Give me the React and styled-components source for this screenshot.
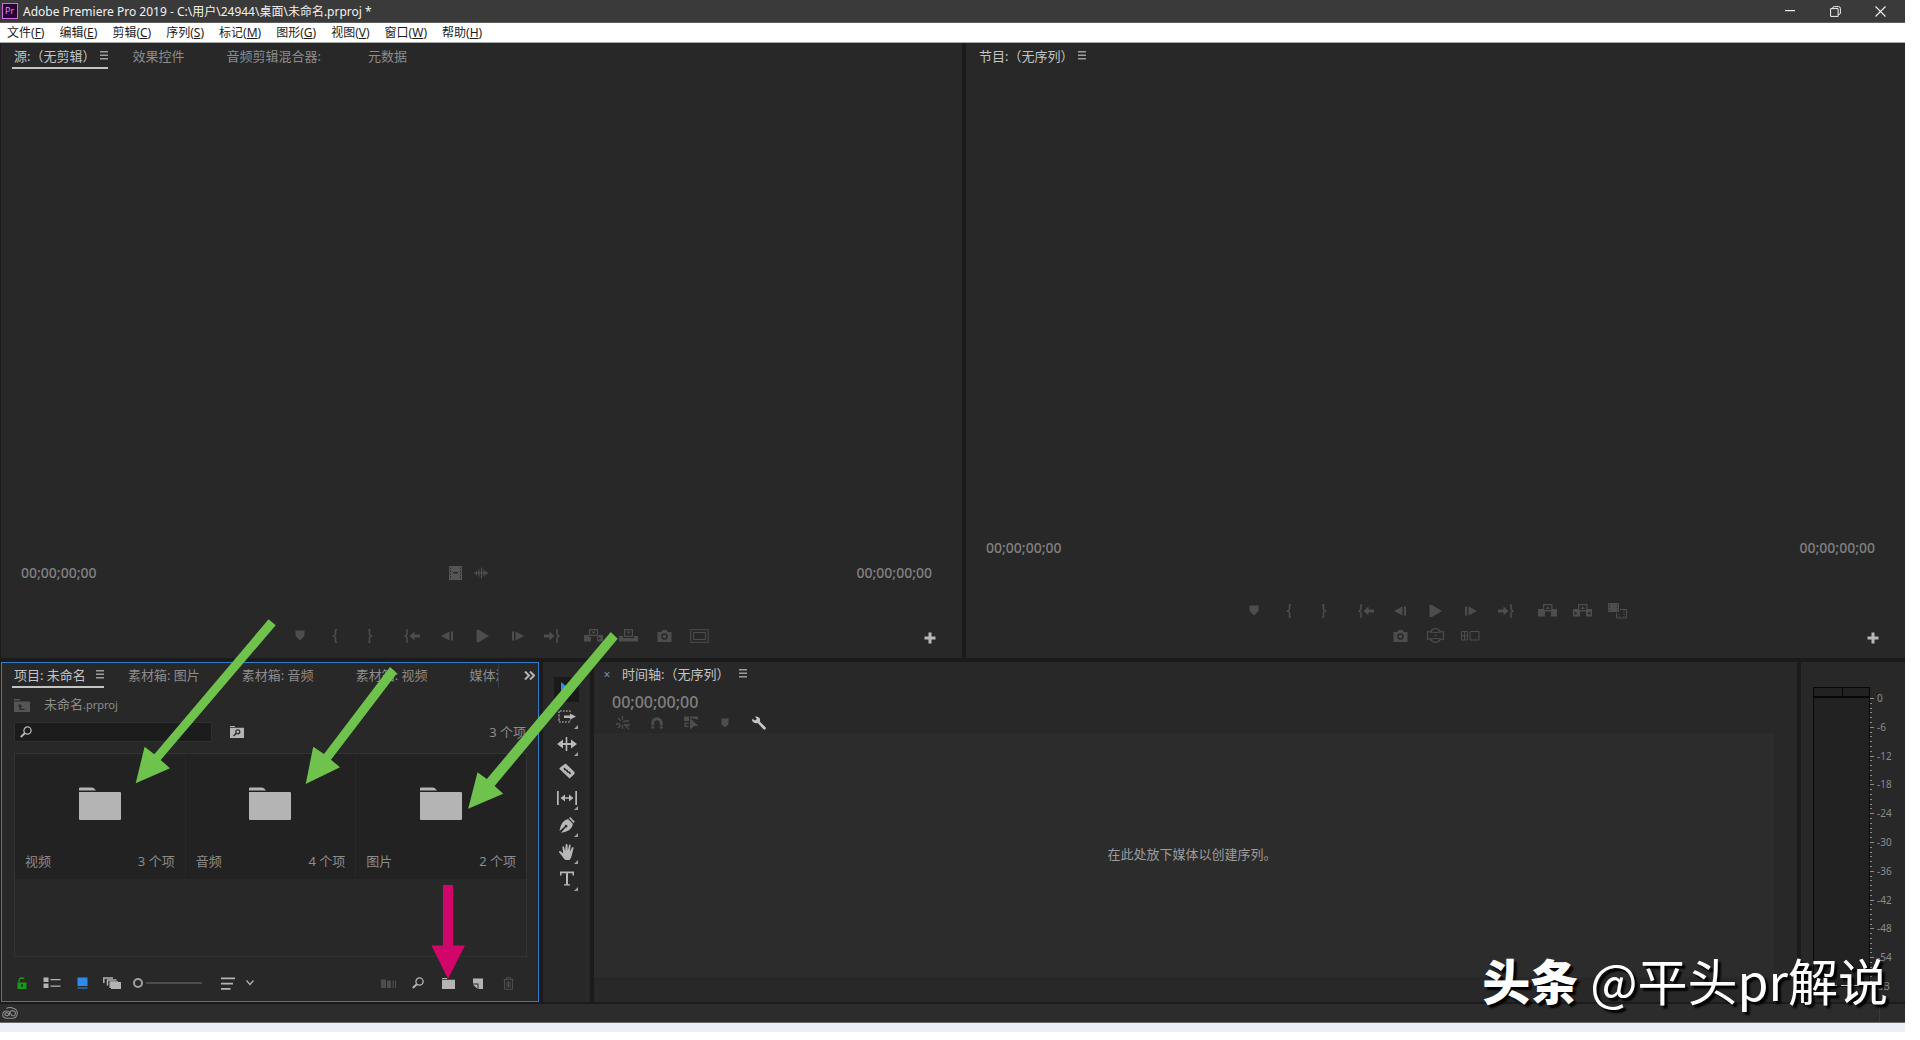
import React, { useState } from "react";
import styled, { createGlobalStyle } from "styled-components";

const GlobalStyle = createGlobalStyle`
  * {
    box-sizing: border-box;
  }
  body {
    margin: 0;
    background: #ffffff;
    font-family: "Noto Sans", "Noto Sans CJK SC", sans-serif;
    font-size: 13px;
    color: #8c8c8c;
  }
  button {
    display: flex;
    align-items: center;
    justify-content: center;
    padding: 0;
    border: none;
    background: none;
    color: inherit;
    font: inherit;
    white-space: nowrap;
  }
`;

const Page = styled.div`
  min-height: 100vh;
  padding: 0 15px 8px 0;
  display: flex;
`;

const Window = styled.div`
  position: relative;
  flex: 1;
  min-width: 0;
  display: flex;
  flex-direction: column;
  background: #1b1b1b;
`;

const TitleBar = styled.header`
  display: flex;
  align-items: center;
  height: 23px;
  padding: 0 2px;
  background: #3a3a3a;
  border-bottom: 1px solid #5c5c5c;
  color: #f2f2f2;
  h1 {
    flex: 1;
    margin: 2px 0 0 5px;
    font-size: 12px;
    font-weight: 400;
    line-height: 20px;
  }
`;

const WindowButton = styled.button`
  width: 45px;
  height: 20px;
`;

const MenuBar = styled.nav`
  display: flex;
  gap: 15px;
  height: 20px;
  padding-left: 7px;
  background: #ffffff;
  border-bottom: 1px solid #a9adab;
  color: #1c1c1c;
  font-size: 12px;
  line-height: 18px;
`;

const TopRow = styled.div`
  flex: 1;
  display: grid;
  grid-template-columns: 961fr 939fr;
  gap: 4px;
  padding-left: 1px;
`;

const BottomRow = styled.div`
  display: grid;
  grid-template-columns: 538fr 47px 1203fr 104px;
  gap: 4px;
  padding: 4px 0 2px 1px;
`;

const Panel = styled.section`
  display: flex;
  flex-direction: column;
  min-width: 0;
  background: #282828;
`;

const MonitorPanel = styled(Panel)`
  padding: 1px 0 10px;
`;

const ProjectPanel = styled(Panel)`
  border: 1px solid #2f7ccb;
`;

const TabRow = styled.div`
  display: flex;
  height: 25px;
  padding-left: ${(p) => p.$indent || 11}px;
`;

const Tab = styled.button`
  gap: ${(p) => (p.$spread ? 10 : 5)}px;
  height: 25px;
  padding: 0 ${(p) => (p.$active ? 0 : 2)}px 0 2px;
  margin-right: ${(p) => p.$gap || 0}px;
  border-bottom: 2px solid ${(p) => (p.$active && !p.$plain ? "#c4c4c4" : "transparent")};
  color: ${(p) => (p.$active ? "#c4c4c4" : "#8c8c8c")};
`;

const ClippedTab = styled.div`
  width: 31px;
  overflow: hidden;
  border-right: 1px solid #3c3c3c;
`;

const OverflowButton = styled.button`
  margin-left: auto;
  width: 17px;
  color: #b4b4b4;
`;

const Viewer = styled.div`
  flex: 1;
  min-height: 200px;
`;

const TimeRow = styled.div`
  display: grid;
  grid-template-columns: 1fr auto 1fr;
  align-items: center;
  height: 20px;
  margin: 0 30px 40px 20px;
`;

const Timecode = styled.span`
  color: #808080;
  font-size: ${(p) => (p.$large ? 16 : 14)}px;
  font-weight: 500;
  line-height: 20px;
  &:last-child {
    justify-self: end;
  }
`;

const MediaButtons = styled.div`
  display: flex;
  gap: 12px;
  padding-right: 17px;
  color: #555555;
`;

const Transport = styled.div`
  display: grid;
  grid-template-columns: 1fr auto 1fr;
  color: #4d4d4d;
`;

const ButtonRows = styled.div`
  grid-column: 2;
  padding-left: ${(p) => p.$shift || 0}px;
`;

const ButtonRow = styled.div`
  display: flex;
  justify-content: center;
`;

const TransportButton = styled.button`
  width: 35px;
  height: 25px;
  margin-left: ${(p) => (p.$apart ? 7 : 0)}px;
`;

const AddButton = styled.button`
  align-self: end;
  justify-self: end;
  width: 22px;
  height: 20px;
  margin-right: 21px;
  color: #b8b8b8;
`;

const PathRow = styled.div`
  display: flex;
  align-items: center;
  gap: 14px;
  height: 34px;
  padding-left: 12px;
  color: #8c8c8c;
  svg {
    color: #555555;
  }
  p {
    margin: 0 0 2px;
    line-height: 18px;
  }
  small {
    font-size: 11px;
  }
`;

const SearchRow = styled.div`
  display: flex;
  align-items: center;
  height: 20px;
  margin: 0 12px 11px;
  line-height: 16px;
  button {
    margin-left: 18px;
    color: #b4b4b4;
  }
`;

const SearchBox = styled.label`
  display: flex;
  align-items: center;
  width: 198px;
  height: 20px;
  padding-left: 5px;
  background: #1c1c1c;
  border: 1px solid #303030;
  border-radius: 2px;
  color: #b4b4b4;
  input {
    flex: 1;
    min-width: 0;
    border: none;
    outline: none;
    background: none;
    color: #c4c4c4;
  }
`;

const Count = styled.span`
  margin-left: auto;
  color: #8c8c8c;
`;

const BinGrid = styled.div`
  flex: 1;
  min-height: 204px;
  margin: 0 11px 0 12px;
  border: 1px solid #323232;
  display: grid;
  grid-template-columns: repeat(3, 1fr);
  align-content: start;
  gap: 1px;
`;

const Bin = styled.div`
  display: flex;
  flex-direction: column;
  height: 125px;
  background: #222222;
  color: #b4b4b4;
`;

const BinThumb = styled.div`
  flex: 1;
  display: flex;
  align-items: flex-end;
  justify-content: center;
  padding-bottom: 31px;
`;

const BinInfo = styled.div`
  display: flex;
  height: 28px;
  padding: 0 10px;
  line-height: 20px;
  color: #8c8c8c;
`;

const ProjectTools = styled.div`
  display: flex;
  align-items: center;
  height: 44px;
  padding: 8px 15px 0 5px;
  color: #b4b4b4;
`;

const ProjectButton = styled.button`
  width: 30px;
  height: 24px;
  color: ${(p) => p.$color || "#b4b4b4"};
  margin-left: ${(p) => (p.$pushed ? "auto" : "0")};
`;

const SortOptions = styled.button`
  width: 14px;
`;

const ZoomSlider = styled.input`
  appearance: none;
  width: 72px;
  height: 12px;
  margin: 0 8px 0 6px;
  background: linear-gradient(#4c4c4c, #4c4c4c) 13px 50% / 56px 2px no-repeat;
  &::-webkit-slider-thumb {
    appearance: none;
    width: 10px;
    height: 10px;
    border: 2px solid #a0a0a0;
    border-radius: 50%;
    background: #282828;
  }
`;

const ToolPanel = styled(Panel)`
  align-items: center;
  gap: 2px;
  padding-top: 15px;
  color: #b8b8b8;
`;

const ToolButton = styled.button`
  position: relative;
  width: 25px;
  height: 25px;
  background: ${(p) => (p.$active ? "#1a1a1a" : "none")};
  color: ${(p) => (p.$active ? "#2d8ceb" : "inherit")};
  &::after {
    content: "";
    display: ${(p) => (p.$more ? "block" : "none")};
    position: absolute;
    right: 1px;
    bottom: 0;
    border: 2px solid transparent;
    border-right-color: #a0a0a0;
    border-bottom-color: #a0a0a0;
  }
`;

const CloseTab = styled.button`
  width: 12px;
  margin-right: 7px;
  font-size: 12px;
`;

const TimelineHead = styled.div`
  display: flex;
  height: 26px;
  padding: 5px 0 0 18px;
`;

const TimelineTools = styled.div`
  display: flex;
  height: 20px;
  padding-left: 12px;
  color: #4d4d4d;
`;

const TimelineButton = styled.button`
  width: 34px;
  color: ${(p) => p.$color || "inherit"};
`;

const DropArea = styled.div`
  flex: 1;
  display: flex;
  align-items: center;
  justify-content: center;
  margin: 0 23px 25px 0;
  padding: 0 0 4px 16px;
  background: #2c2c2c;
  color: #9c9c9c;
`;

const MeterPanel = styled(Panel)`
  flex-direction: row;
  padding: 25px 0 15px 12px;
`;

const Meter = styled.div`
  width: 57px;
  display: flex;
  flex-direction: column;
  border: 1px solid #080808;
  background: #222222;
`;

const PeakLights = styled.div`
  display: grid;
  grid-template-columns: 1fr 1fr;
  height: 10px;
  border-bottom: 2px solid #080808;
  span + span {
    border-left: 1px solid #080808;
  }
`;

const MeterFloor = styled.div`
  display: flex;
  gap: 4px;
  margin: auto 10px 0 4px;
  span {
    flex: 1;
    height: 1px;
    background: #e6e600;
  }
`;

const Scale = styled.div`
  flex: 1;
  display: flex;
  flex-direction: column;
  padding-top: 11px;
  font-size: 10px;
`;

const ScaleStep = styled.div`
  flex: 1;
  display: flex;
  gap: 3px;
  span {
    line-height: 10px;
    margin-top: -5px;
  }
`;

const Ticks = styled.div`
  width: 4px;
  display: flex;
  flex-direction: column;
  i {
    flex: 1;
    width: 2px;
    border-top: 1px solid #8c8c8c;
  }
  i:first-child {
    width: 4px;
  }
`;

const ScaleEnd = styled.div`
  height: 1px;
  padding-left: 7px;
  line-height: 1px;
`;

const StatusBar = styled.footer`
  display: flex;
  align-items: center;
  justify-content: space-between;
  height: 19px;
  padding: 0 25px 0 2px;
  background: #2c2c2c;
  border-bottom: 1px solid #6a6a6c;
  color: #8c8c8c;
  &::after {
    content: "";
    width: 1px;
    height: 18px;
    background: #3a3a3a;
  }
`;

const Desktop = styled.div`
  height: 9px;
  background: #eceff6;
`;

const Arrows = styled.svg`
  position: absolute;
  left: 0;
  bottom: 0;
  pointer-events: none;
`;

const Watermark = styled.div`
  position: absolute;
  right: 17px;
  bottom: 18px;
  display: flex;
  align-items: center;
  gap: 12px;
  color: #ffffff;
  font-family: "Noto Sans CJK SC", sans-serif;
  font-size: 50px;
  line-height: 70px;
  white-space: nowrap;
  text-shadow: 3px 3px 2px #000000;
  strong {
    font-size: 48px;
    font-weight: 900;
  }
`;

// every drawing inherits its colour from the button that holds it
const Icon = ({ w = 16, h = 16, children }) => (
  <svg width={w} height={h} viewBox={`0 0 ${w} ${h}`} fill="currentColor" aria-hidden="true">
    {children}
  </svg>
);

const stroke = { fill: "none", stroke: "currentColor" };

const icons = {
  menu: (
    <Icon w={8} h={9}>
      <path d="M0 0h8v1.5H0zM0 3.5h8V5H0zM0 7h8v1.5H0z" opacity=".75" />
    </Icon>
  ),
  chevrons: (
    <Icon w={11} h={9}>
      <path d="M1 0.5l4 4-4 4M6 0.5l4 4-4 4" {...stroke} strokeWidth="2" />
    </Icon>
  ),
  film: (
    <Icon w={13} h={14}>
      <path fillRule="evenodd" d="M0 0h13v14H0zM4 6h5v1.5H4zM1 1.5h1v1.5H1zM1 4.5h1V6H1zM1 7.5h1V9H1zM1 10.5h1V12H1zM11 1.5h1V3h-1zM11 4.5h1V6h-1zM11 7.5h1V9h-1zM11 10.5h1V12h-1z" />
    </Icon>
  ),
  wave: (
    <Icon w={14} h={12}>
      <path d="M0 6h14M2.5 4v4M5 2.5v7M7.500 0.5v11M10 2.5v7M12 4v4" {...stroke} />
    </Icon>
  ),
  marker: (
    <Icon w={10} h={11}>
      <path d="M0.5 0.5h9v5.500L5 10.5 0.5 6z" />
    </Icon>
  ),
  markIn: (
    <Icon w={6} h={14}>
      <path d="M5 1H3.500v4.500L1.500 7l2 1.500V13H5" {...stroke} strokeWidth="1.500" />
    </Icon>
  ),
  markOut: (
    <Icon w={6} h={14}>
      <path d="M1 1h1.500v4.500L4.500 7l-2 1.500V13H1" {...stroke} strokeWidth="1.500" />
    </Icon>
  ),
  goIn: (
    <Icon w={16} h={14}>
      <path d="M4 1H3v4.500L1 7l2 1.500V13h1" {...stroke} strokeWidth="1.500" />
      <path d="M5.500 7l5-4.500V5.500H16v3h-5.500v3z" />
    </Icon>
  ),
  goOut: (
    <Icon w={16} h={14}>
      <path d="M12 1h1v4.500L15 7l-2 1.500V13h-1" {...stroke} strokeWidth="1.500" />
      <path d="M10.500 7l-5-4.500V5.500H0v3h5.500v3z" />
    </Icon>
  ),
  stepBack: (
    <Icon w={13} h={10}>
      <path d="M0 5l8.500-4.500v9zM10 0.500h2v9h-2z" />
    </Icon>
  ),
  play: (
    <Icon w={13} h={12}>
      <path d="M0.500 0H3l10 6-10 6H0.500z" />
    </Icon>
  ),
  stepForward: (
    <Icon w={13} h={10}>
      <path d="M13 5L4.500 0.500v9zM1 0.500h2v9H1z" />
    </Icon>
  ),
  insert: (
    <Icon w={20} h={13}>
      <path fillRule="evenodd" d="M5 0h9v7H5zM6.200 1.200v4.600h6.600V1.200zM0 6h5.500v2H7v4.500H0zM13 6h6v6.500h-6zM14 7.500v3.500l3-1.800z" />
      <path d="M7.500 2.500h4L9.500 5z" />
    </Icon>
  ),
  overwrite: (
    <Icon w={20} h={13}>
      <path fillRule="evenodd" d="M5 0h9v8H5zM6.200 1.200v5.600h6.600V1.200zM0 7h4v2h11V7h4v5.500H0z" />
      <path d="M7.500 2.500h4L9.500 5z" />
    </Icon>
  ),
  lift: (
    <Icon w={20} h={13}>
      <path fillRule="evenodd" d="M5 0h9.500v5H19v7.500h-6V7.500H7v5H0V5h5zM6.200 1.200V6h7V1.200z" />
      <path d="M7.500 5L9.700 2.500 12 5z" />
    </Icon>
  ),
  extract: (
    <Icon w={20} h={13}>
      <path fillRule="evenodd" d="M5 0h9.500v5H19v7.500h-6V7.500H7v5H0V5h5zM6.200 1.200V6h7V1.200zM1.500 7.500v3.500l3-1.800zM17.500 7.500v3.500l-3-1.800z" />
      <path d="M7.500 5L9.700 2.500 12 5z" />
    </Icon>
  ),
  camera: (
    <Icon w={15} h={12}>
      <path fillRule="evenodd" d="M0.500 2H4L5.500 0h4L11 2h3.500v10H0.500zM7.500 3.200a3.300 3.300 0 100 6.600 3.300 3.300 0 000-6.600zm0 1.500a1.800 1.800 0 110 3.600 1.800 1.800 0 010-3.600z" />
    </Icon>
  ),
  frame: (
    <Icon w={19} h={14}>
      <path d="M0.700 0.700h17.600v12.600H0.700zM3.500 3.500h12v7h-12z" {...stroke} />
    </Icon>
  ),
  compare: (
    <Icon w={20} h={16}>
      <path fillRule="evenodd" d="M0 0h11v9H0zM1 1.500v1h1v-1zM1 4v1h1V4zM1 6.500v1h1v-1zM9 1.500v1h1v-1zM9 4v1h1V4zM9 6.500v1h1v-1z" />
      <path d="M12 6.500h6.500v8.500h-10V10" {...stroke} />
      <path d="M11 11v4M16 7v8" {...stroke} strokeDasharray="1 1" />
    </Icon>
  ),
  vr: (
    <Icon w={17} h={15}>
      <path d="M0.500 3.500q8 2 16 0v8q-8-2-16 0zM3.500 3.500q5-6 10 0M3.500 11.500q5 6 10 0" {...stroke} strokeWidth="1.200" />
      <path d="M7.500 6.800h2v1.400h-2z" />
    </Icon>
  ),
  multicam: (
    <Icon w={19} h={10}>
      <path d="M0.500 0.500h6v8.500h-6zM3.500 0v9M0 4.700h7M9 0.500h9v8.500H9z" {...stroke} />
    </Icon>
  ),
  add: (
    <Icon w={12} h={12}>
      <path d="M4.500 0.500h3v4h4v3h-4v4h-3v-4h-4v-3h4z" />
    </Icon>
  ),
  folderUp: (
    <Icon w={16} h={13}>
      <path fillRule="evenodd" d="M0 0h6v1.500H0zM0 2.500h16V13H0zM6 5L3.500 7.500h2V11h5V9.700H7V7.500h1.500z" />
    </Icon>
  ),
  magnifier: (
    <Icon w={12} h={12}>
      <circle cx="7.500" cy="4.500" r="3.600" {...stroke} strokeWidth="1.300" />
      <path d="M5 7L0.800 11" {...stroke} strokeWidth="2" />
    </Icon>
  ),
  binSearch: (
    <Icon w={14} h={12}>
      <path d="M0 0h5v1H0zM0 1.800h14V12H0z" />
      <circle cx="7.800" cy="5.800" r="2" fill="none" stroke="#282828" strokeWidth="1.200" />
      <path d="M6.300 7.300L3.500 10" fill="none" stroke="#282828" strokeWidth="1.500" />
    </Icon>
  ),
  folder: (
    <Icon w={42} h={33}>
      <path d="M0 3.500V1.500Q0 0.500 1 0.500h12q2 0 4 3zM0 5h41q1 0 1 1v26q0 1-1 1H1q-1 0-1-1z" />
    </Icon>
  ),
  lock: (
    <Icon w={10} h={12}>
      <path fillRule="evenodd" d="M0.500 5.500h9V12h-9zM4.300 7v3h1.400V7z" />
      <path d="M2 5.500V4a3 3 0 013-3q1.500 0 2 1" {...stroke} strokeWidth="1.300" />
    </Icon>
  ),
  list: (
    <Icon w={18} h={12}>
      <path d="M0.500 0.500h5v4.500h-5zM0.500 6.500h5V11h-5zM7.500 2h10v1.200h-10zM7.500 8.500h10v1.200h-10z" />
    </Icon>
  ),
  iconView: (
    <Icon w={11} h={12}>
      <path d="M0.500 0.500h10V9h-10zM0.500 10.500h10v1h-10z" />
    </Icon>
  ),
  freeform: (
    <Icon w={18} h={12}>
      <path d="M8 5h10v7H8z" />
      <path d="M0.800 6V1h9.200M4.500 8.500V3h9M7.200 11V5h8" {...stroke} strokeWidth="1.500" />
    </Icon>
  ),
  sort: (
    <Icon w={14} h={13}>
      <path d="M0 0.500h14v1.700H0zM0 5.700h12v1.700H0zM0 11h9.500v1.700H0z" />
    </Icon>
  ),
  chevron: (
    <Icon w={8} h={6}>
      <path d="M0.500 0.500L4 4.500l3.500-4" {...stroke} strokeWidth="1.200" />
    </Icon>
  ),
  automate: (
    <Icon w={15} h={9}>
      <path d="M0 0.500h5V9H0zM6 1.500h4V9H6zM11.500 1.500h1.200V9h-1.200zM14 1.500h1V9h-1z" />
    </Icon>
  ),
  newBin: (
    <Icon w={13} h={11}>
      <path d="M0 0h5v1H0zM0 1.800h13V11H0z" />
    </Icon>
  ),
  newItem: (
    <Icon w={10} h={11}>
      <path d="M0 0.500h10V11H5.500V5.500H0zM0 6.500h4.500V11z" />
    </Icon>
  ),
  trash: (
    <Icon w={11} h={13}>
      <path d="M0.500 2.500h10M3.500 2V0.600h4V2M1.500 3v9.300h8V3M4 4.500v6M5.500 4.500v6M7 4.500v6" {...stroke} />
    </Icon>
  ),
  select: (
    <Icon w={12} h={15}>
      <path d="M0 0l11.500 9H6.500L0 14z" />
    </Icon>
  ),
  track: (
    <Icon w={18} h={13}>
      <path d="M1 3V1h11v1.500M1 9v3h11V10.500M1 4.500v4" {...stroke} strokeWidth="1.200" strokeDasharray="1.800 1.200" />
      <path d="M6 5.500h6V3.500l6 3-6 3.200V8H6z" />
    </Icon>
  ),
  ripple: (
    <Icon w={20} h={14}>
      <path d="M0 7l6-4.500v3.500h2.700V0h1.600v6H14V2.500L20 7l-6 4.500V8h-3.700v6H8.700V8H6v3.500z" />
    </Icon>
  ),
  razor: (
    <Icon w={16} h={16}>
      <path fillRule="evenodd" d="M6.500 0.500L8.500 2.300 15.500 9v2L10.500 15.500 8.500 13.500 0.500 6V5zM4.500 5.500l1 2 1.500 0.300 1 1.700 1.500 0.300 1.500 1.700 1-1-1-1.700-1.500-0.300-1-1.700L7 6.500 5.800 4.500z" />
    </Icon>
  ),
  slip: (
    <Icon w={20} h={14}>
      <path d="M0 0h1.700v14H0zM18.300 0H20v14h-1.700zM3.500 7l4.500-3.500V6.300h4V3.500L16.500 7 12 10.500V7.700H8v2.800z" />
    </Icon>
  ),
  pen: (
    <Icon w={16} h={16}>
      <path d="M10 1l1.200-0.900 4.600 4.600L14.500 6z" />
      <path fillRule="evenodd" d="M9 2l4.800 4.800q-0.300 4.200-4.300 6.700-3.500 1.800-7.500 2.200l4.700-5.200a1.400 1.400 0 10-1-1L0.500 14Q1 9 3.500 5.500 6 2.500 9 2z" />
    </Icon>
  ),
  hand: (
    <Icon w={16} h={16}>
      <path d="M4.200 9.500L3.400 3.500q-0.200-1.200 0.700-1.300 0.800 0 1.100 1.200l1 3.600L6.600 1q0-1 0.900-1t1 1l0.300 5.800L9.900 1.500q0.200-1 1-0.900 0.900 0.200 0.700 1.400L11 7.500l1.900-3.700q0.600-1 1.300-0.600 0.700 0.400 0.200 1.600L13 10.500q-0.700 4-2.500 5.500H6.300Q4.500 14.500 3 12L0.300 8.500q-0.600-1 0.200-1.500 0.700-0.300 1.500 0.400z" />
    </Icon>
  ),
  type: (
    <Icon w={14} h={15}>
      <path d="M0 0.500h14v4h-1.500V2.300H8v10.900h2v1.300H4v-1.300h2V2.300H1.500v2.200H0z" />
    </Icon>
  ),
  nest: (
    <Icon w={14} h={14}>
      <path d="M6.500 0v4M6.500 9v4M0 8h4M9 5h4M2 2l3 3M8 8l5 5M2 12l3-3M9 9h5M7 5.500h2" {...stroke} strokeWidth="1.300" />
    </Icon>
  ),
  magnet: (
    <Icon w={12} h={12}>
      <path d="M1.800 11.500V6a4.200 4.200 0 018.400 0v5.500" {...stroke} strokeWidth="3" />
      <path d="M0 8.500h12v1H0z" fill="#282828" />
    </Icon>
  ),
  linked: (
    <Icon w={15} h={14}>
      <path d="M0 0.500h5v4.500H0zM6 0.500h8v3L6 2zM6 2l8.500 8h-4L6 13.500zM0.500 6.500h4v1.200H1.700v2h2.800V11H0.500z" />
    </Icon>
  ),
  marker2: (
    <Icon w={8} h={10}>
      <path d="M0.500 0.500h7v6L4 9.500 0.500 6.500z" />
    </Icon>
  ),
  wrench: (
    <Icon w={14} h={14}>
      <path d="M3 0.500Q6 0 7.500 2q1 1.800 0.300 3.500l6 6q0.500 1.500-1 2.200-1 0-1.600-0.700L5.700 7Q2.500 8 0.500 5.500q-0.700-1.500 0-2.800L3 4.500 4.800 3z" />
    </Icon>
  ),
  cloud: (
    <Icon w={16} h={12}>
      <path d="M4.500 1.500Q8-0.500 11 1.300 15 2 15.300 6q-0.300 4.800-4 5.300H4Q0.700 10.500 0.700 7.500 1 4 4.500 4q3 0 4 2.500l1.500 2q2 1 3.200-0.800Q14 5 12 4 9.500 3 8 5L6.500 8q-1.800 1.500-3.300 0Q2.300 6 4.500 5.500q1.500 0 3.500 3" {...stroke} strokeWidth="1.100" />
    </Icon>
  ),
  minimize: (
    <Icon w={11} h={11}>
      <path d="M0 4h10v1.200H0z" />
    </Icon>
  ),
  restore: (
    <Icon w={11} h={11}>
      <path d="M0.600 2.600h7.500v7.800H0.600zM2.500 2.500Q2.500 0.600 4.500 0.600H8.500q1.900 0 1.900 1.900V7q0 1.500-2 1.500" {...stroke} />
    </Icon>
  ),
  close: (
    <Icon w={11} h={11}>
      <path d="M0.500 0.500l10 10M10.500 0.500l-10 10" {...stroke} strokeWidth="1.100" />
    </Icon>
  ),
};

const menus = [
  ["文件", "F"],
  ["编辑", "E"],
  ["剪辑", "C"],
  ["序列", "S"],
  ["标记", "M"],
  ["图形", "G"],
  ["视图", "V"],
  ["窗口", "W"],
  ["帮助", "H"],
];

const baseTransport = [
  ["marker", "添加标记"],
  ["markIn", "标记入点"],
  ["markOut", "标记出点"],
  ["goIn", "转到入点", true],
  ["stepBack", "后退一帧"],
  ["play", "播放"],
  ["stepForward", "前进一帧"],
  ["goOut", "转到出点"],
];

const sourceTransport = [
  [
    ...baseTransport,
    ["insert", "插入", true],
    ["overwrite", "覆盖"],
    ["camera", "导出帧"],
    ["frame", "安全边距"],
  ],
];

const programTransport = [
  [
    ...baseTransport,
    ["lift", "提升", true],
    ["extract", "提取"],
    ["compare", "比较视图"],
  ],
  [
    ["camera", "导出帧"],
    ["vr", "切换 VR 视频显示"],
    ["multicam", "切换多机位视图"],
  ],
];

const bins = [
  { name: "视频", count: 3 },
  { name: "音频", count: 4 },
  { name: "图片", count: 2 },
];

const tools = [
  ["select", "选择工具", false],
  ["track", "向前选择轨道工具", true],
  ["ripple", "波纹编辑工具", true],
  ["razor", "剃刀工具", false],
  ["slip", "外滑工具", true],
  ["pen", "钢笔工具", true],
  ["hand", "手形工具", true],
  ["type", "文字工具", true],
];

const levels = ["0", "-6", "-12", "-18", "-24", "-30", "-36", "-42", "-48", "-54"];

const TransportBar = ({ rows, shift }) => (
  <Transport>
    <ButtonRows $shift={shift}>
      {rows.map((row, i) => (
        <ButtonRow key={i}>
          {row.map(([icon, label, apart]) => (
            <TransportButton key={icon} aria-label={label} $apart={apart}>
              {icons[icon]}
            </TransportButton>
          ))}
        </ButtonRow>
      ))}
    </ButtonRows>
    <AddButton aria-label="按钮编辑器">{icons.add}</AddButton>
  </Transport>
);

const SourceMonitor = () => (
  <MonitorPanel>
    <TabRow>
      <Tab $active $gap={22}>源:（无剪辑）{icons.menu}</Tab>
      <Tab $gap={38}>效果控件</Tab>
      <Tab $gap={43}>音频剪辑混合器:</Tab>
      <Tab>元数据</Tab>
    </TabRow>
    <Viewer />
    <TimeRow>
      <Timecode>00;00;00;00</Timecode>
      <MediaButtons>
        <button aria-label="仅拖动视频">{icons.film}</button>
        <button aria-label="仅拖动音频">{icons.wave}</button>
      </MediaButtons>
      <Timecode>00;00;00;00</Timecode>
    </TimeRow>
    <TransportBar rows={sourceTransport} shift={36} />
  </MonitorPanel>
);

const ProgramMonitor = () => (
  <MonitorPanel>
    <TabRow>
      <Tab $active $plain>节目:（无序列）{icons.menu}</Tab>
    </TabRow>
    <Viewer />
    <TimeRow>
      <Timecode>00;00;00;00</Timecode>
      <span />
      <Timecode>00;00;00;00</Timecode>
    </TimeRow>
    <TransportBar rows={programTransport} />
  </MonitorPanel>
);

const Project = () => {
  const [size, setSize] = useState(0);
  const [query, setQuery] = useState("");

  return (
    <ProjectPanel>
      <TabRow $indent={10}>
        <Tab $active $spread $gap={22}>项目: 未命名{icons.menu}</Tab>
        <Tab $gap={38}>素材箱: 图片</Tab>
        <Tab $gap={38}>素材箱: 音频</Tab>
        <Tab $gap={38}>素材箱: 视频</Tab>
        <ClippedTab>
          <Tab>媒体浏览器</Tab>
        </ClippedTab>
        <OverflowButton aria-label="更多面板">{icons.chevrons}</OverflowButton>
      </TabRow>
      <PathRow>
        {icons.folderUp}
        <p>未命名<small>.prproj</small></p>
      </PathRow>
      <SearchRow>
        <SearchBox>
          {icons.magnifier}
          <input aria-label="搜索" value={query} onChange={(e) => setQuery(e.target.value)} />
        </SearchBox>
        <button aria-label="从查询创建新的搜索素材箱">{icons.binSearch}</button>
        <Count>3 个项</Count>
      </SearchRow>
      <BinGrid>
        {bins.map((bin) => (
          <Bin key={bin.name}>
            <BinThumb>{icons.folder}</BinThumb>
            <BinInfo>
              <span>{bin.name}</span>
              <Count>{bin.count} 个项</Count>
            </BinInfo>
          </Bin>
        ))}
      </BinGrid>
      <ProjectTools>
        <ProjectButton aria-label="项目可写" $color="#159a15">{icons.lock}</ProjectButton>
        <ProjectButton aria-label="列表视图">{icons.list}</ProjectButton>
        <ProjectButton aria-label="图标视图" $color="#2d8ceb">{icons.iconView}</ProjectButton>
        <ProjectButton aria-label="自由变换视图">{icons.freeform}</ProjectButton>
        <ZoomSlider
          type="range"
          aria-label="调整图标大小"
          min="0"
          max="100"
          value={size}
          onChange={(e) => setSize(Number(e.target.value))}
        />
        <ProjectButton aria-label="排序图标">{icons.sort}</ProjectButton>
        <SortOptions aria-label="排序选项">{icons.chevron}</SortOptions>
        <ProjectButton aria-label="自动匹配序列" $color="#4d4d4d" $pushed>{icons.automate}</ProjectButton>
        <ProjectButton aria-label="查找">{icons.magnifier}</ProjectButton>
        <ProjectButton aria-label="新建素材箱">{icons.newBin}</ProjectButton>
        <ProjectButton aria-label="新建项">{icons.newItem}</ProjectButton>
        <ProjectButton aria-label="清除" $color="#4d4d4d">{icons.trash}</ProjectButton>
      </ProjectTools>
    </ProjectPanel>
  );
};

const Tools = () => {
  const [active, setActive] = useState("select");

  return (
    <ToolPanel>
      {tools.map(([icon, label, more]) => (
        <ToolButton
          key={icon}
          aria-label={label}
          $active={active === icon}
          $more={more}
          onClick={() => setActive(icon)}
        >
          {icons[icon]}
        </ToolButton>
      ))}
    </ToolPanel>
  );
};

const Timeline = () => (
  <Panel>
    <TabRow $indent={7}>
      <CloseTab aria-label="关闭">×</CloseTab>
      <Tab $active $plain $spread>时间轴:（无序列）{icons.menu}</Tab>
    </TabRow>
    <TimelineHead>
      <Timecode $large>00;00;00;00</Timecode>
    </TimelineHead>
    <TimelineTools>
      <TimelineButton aria-label="嵌套序列">{icons.nest}</TimelineButton>
      <TimelineButton aria-label="对齐">{icons.magnet}</TimelineButton>
      <TimelineButton aria-label="链接选择项">{icons.linked}</TimelineButton>
      <TimelineButton aria-label="添加标记">{icons.marker2}</TimelineButton>
      <TimelineButton aria-label="时间轴显示设置" $color="#c4c4c4">{icons.wrench}</TimelineButton>
    </TimelineTools>
    <DropArea>在此处放下媒体以创建序列。</DropArea>
  </Panel>
);

const AudioMeters = () => (
  <MeterPanel>
    <Meter>
      <PeakLights>
        <span />
        <span />
      </PeakLights>
      <MeterFloor>
        <span />
        <span />
      </MeterFloor>
    </Meter>
    <Scale>
      {levels.map((level) => (
        <ScaleStep key={level}>
          <Ticks>
            <i /><i /><i /><i /><i /><i />
          </Ticks>
          <span>{level}</span>
        </ScaleStep>
      ))}
      <ScaleEnd>dB</ScaleEnd>
    </Scale>
  </MeterPanel>
);

const App = () => {
  return (
    <Page>
      <GlobalStyle />
      <Window>
        <TitleBar>
          <svg width="16" height="16" viewBox="0 0 16 16" aria-hidden="true">
            <rect x="0.5" y="0.5" width="15" height="15" fill="#2a0034" stroke="#d06be8" />
            <text x="3" y="11" fill="#d98bf0" fontSize="9" fontFamily="Noto Sans">Pr</text>
          </svg>
          <h1>Adobe Premiere Pro 2019 - C:\用户\24944\桌面\未命名.prproj *</h1>
          <WindowButton aria-label="最小化">{icons.minimize}</WindowButton>
          <WindowButton aria-label="还原">{icons.restore}</WindowButton>
          <WindowButton aria-label="关闭">{icons.close}</WindowButton>
        </TitleBar>
        <MenuBar>
          {menus.map(([name, key]) => (
            <button key={key}>
              {name}(<u>{key}</u>)
            </button>
          ))}
        </MenuBar>
        <TopRow>
          <SourceMonitor />
          <ProgramMonitor />
        </TopRow>
        <BottomRow>
          <Project />
          <Tools />
          <Timeline />
          <AudioMeters />
        </BottomRow>
        <StatusBar>{icons.cloud}</StatusBar>
        <Desktop />
        <Arrows width="640" height="432" viewBox="0 600 640 432" aria-hidden="true">
          <g fill="#6fc24c">
            <path d="M268.600 619.300l7.100 6L160.700 760l9.300 8.300-34.300 15 8.900-36.600 9.700 7.600z" />
            <path d="M390 667l7 6.300-66 86.400 9 7.600-34.300 16.700 7.500-37.300 10.800 7.300z" />
            <path d="M610.800 632l6.900 6.700L494.600 786l8.600 7.700-35 15 9.300-36.400 9.300 6.700z" />
          </g>
          <path d="M443 885h10v60.500h12L448 979l-16.600-33.500H443z" fill="#d0066a" />
        </Arrows>
        <Watermark>
          <strong>头条</strong>
          <span>@平头pr解说</span>
        </Watermark>
      </Window>
    </Page>
  );
};

export default App;
